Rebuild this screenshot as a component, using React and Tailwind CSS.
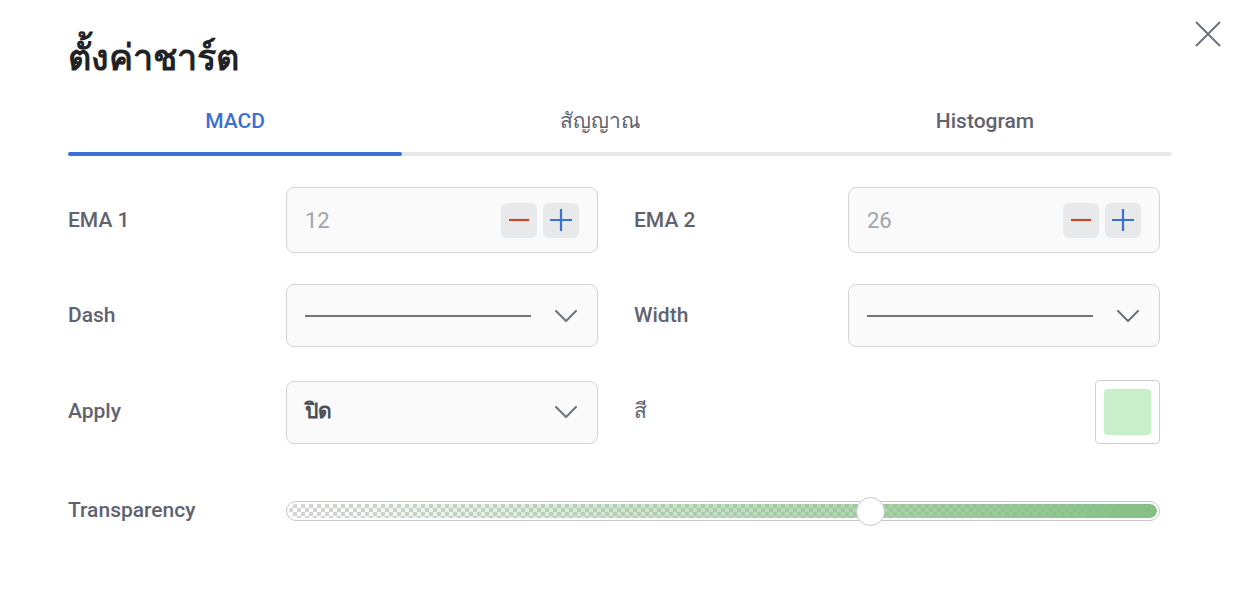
import React from 'react';

const font = { fontFamily: 'Roboto, "Noto Sans", "DejaVu Sans", sans-serif' };

function Chevron() {
  return (
    <svg width="22" height="12" viewBox="0 0 22 12" fill="none">
      <path d="M1 1l10 10L21 1" stroke="#6b7280" strokeWidth="2" strokeLinecap="round" strokeLinejoin="round" />
    </svg>
  );
}

function Stepper({ value }) {
  return (
    <div className="flex items-center w-[312px] h-[66px] rounded-lg border border-[#d4d4d8] bg-[#fafafa] pl-[18px] pr-[18px]">
      <span className="flex-1 text-[22px] font-normal text-[#a0a4ab]">{value}</span>
      <div className="flex gap-[6px]">
        <button className="w-9 h-[35px] rounded-md bg-[#e8e9eb] flex items-center justify-center">
          <svg width="20" height="20" viewBox="0 0 20 20"><path d="M0 10h20" stroke="#c8462b" strokeWidth="2.2" /></svg>
        </button>
        <button className="w-9 h-[35px] rounded-md bg-[#e8e9eb] flex items-center justify-center">
          <svg width="22" height="22" viewBox="0 0 22 22"><path d="M0 11h22M11 0v22" stroke="#3b6fd6" strokeWidth="2.2" /></svg>
        </button>
      </div>
    </div>
  );
}

function LineSelect() {
  return (
    <div className="flex items-center w-[312px] h-[63px] rounded-lg border border-[#d4d4d8] bg-[#fafafa] pl-[18px] pr-[20px]">
      <div className="w-[226px] h-[2px] bg-[#757575]" />
      <div className="flex-1" />
      <Chevron />
    </div>
  );
}

export default function App() {
  return (
    <div className="w-[1244px] h-[596px] bg-white relative" style={font}>
      <button className="absolute left-[1195px] top-[21px] text-[#6b7280]">
        <svg width="26" height="26" viewBox="0 0 26 26"><path d="M1 1l24 24M25 1L1 25" stroke="#6b7280" strokeWidth="2" /></svg>
      </button>
      <div className="px-[68px] pt-[30px]">
        <h1 className="text-[36px] font-bold text-[#1f2328] leading-[56px]">ตั้งค่าชาร์ต</h1>
        <div className="mt-[15px] w-[1104px]">
          <div className="flex h-[40px] pt-[2px] items-center text-[21px] font-medium">
            <div className="w-[334px] text-center text-[#3b6fd6]">MACD</div>
            <div className="w-[396px] text-center text-[#5f6370]">สัญญาณ</div>
            <div className="w-[374px] text-center text-[#5f6370]">Histogram</div>
          </div>
          <div className="mt-[11px] h-1 rounded-full bg-[#e8e8ea] flex">
            <div className="w-[334px] h-1 rounded-full bg-[#3b6fd6]" />
          </div>
        </div>

        <div className="mt-[31px] flex flex-col text-[21px] font-medium text-[#5f6370]">
          <div className="flex items-center h-[66px]">
            <div className="w-[218px] pt-[2px]">EMA 1</div>
            <Stepper value="12" />
            <div className="w-[214px] ml-[36px] pt-[2px]">EMA 2</div>
            <Stepper value="26" />
          </div>
          <div className="flex items-center h-[63px] mt-[31px]">
            <div className="w-[218px]">Dash</div>
            <LineSelect />
            <div className="w-[214px] ml-[36px]">Width</div>
            <LineSelect />
          </div>
          <div className="flex items-center h-[64px] mt-[33px]">
            <div className="w-[218px]">Apply</div>
            <div className="flex items-center w-[312px] h-[63px] rounded-lg border border-[#d4d4d8] bg-[#fafafa] pl-[18px] pr-[20px]">
              <span className="flex-1 text-[#4b4f57] font-semibold">ปิด</span>
              <Chevron />
            </div>
            <div className="w-[214px] ml-[36px]">สี</div>
            <div className="flex-1" />
            <div className="w-[65px] h-[64px] rounded border border-[#d0d0d4] bg-white p-2 mr-[16px]">
              <div className="w-full h-full rounded bg-[#c8efca]" />
            </div>
          </div>
          <div className="flex items-center h-[34px] mt-[50px]">
            <div className="w-[218px]">Transparency</div>
            <div className="relative w-[874px] h-[20px] rounded-full border border-[#c8c8cc] bg-white p-[2px]">
              <div className="w-full h-full rounded-full bg-[repeating-conic-gradient(#d4d4d4_0_25%,#ffffff_0_50%)] bg-[length:8px_8px] overflow-hidden">
                <div className="w-full h-full rounded-full bg-[linear-gradient(to_right,rgba(132,192,132,0),rgba(132,192,132,1))]" />
              </div>
              <div className="absolute left-[569px] top-[-5px] w-[29px] h-[29px] rounded-full bg-white border border-[#c8c8cc]" />
            </div>
          </div>
        </div>
      </div>
    </div>
  );
}
